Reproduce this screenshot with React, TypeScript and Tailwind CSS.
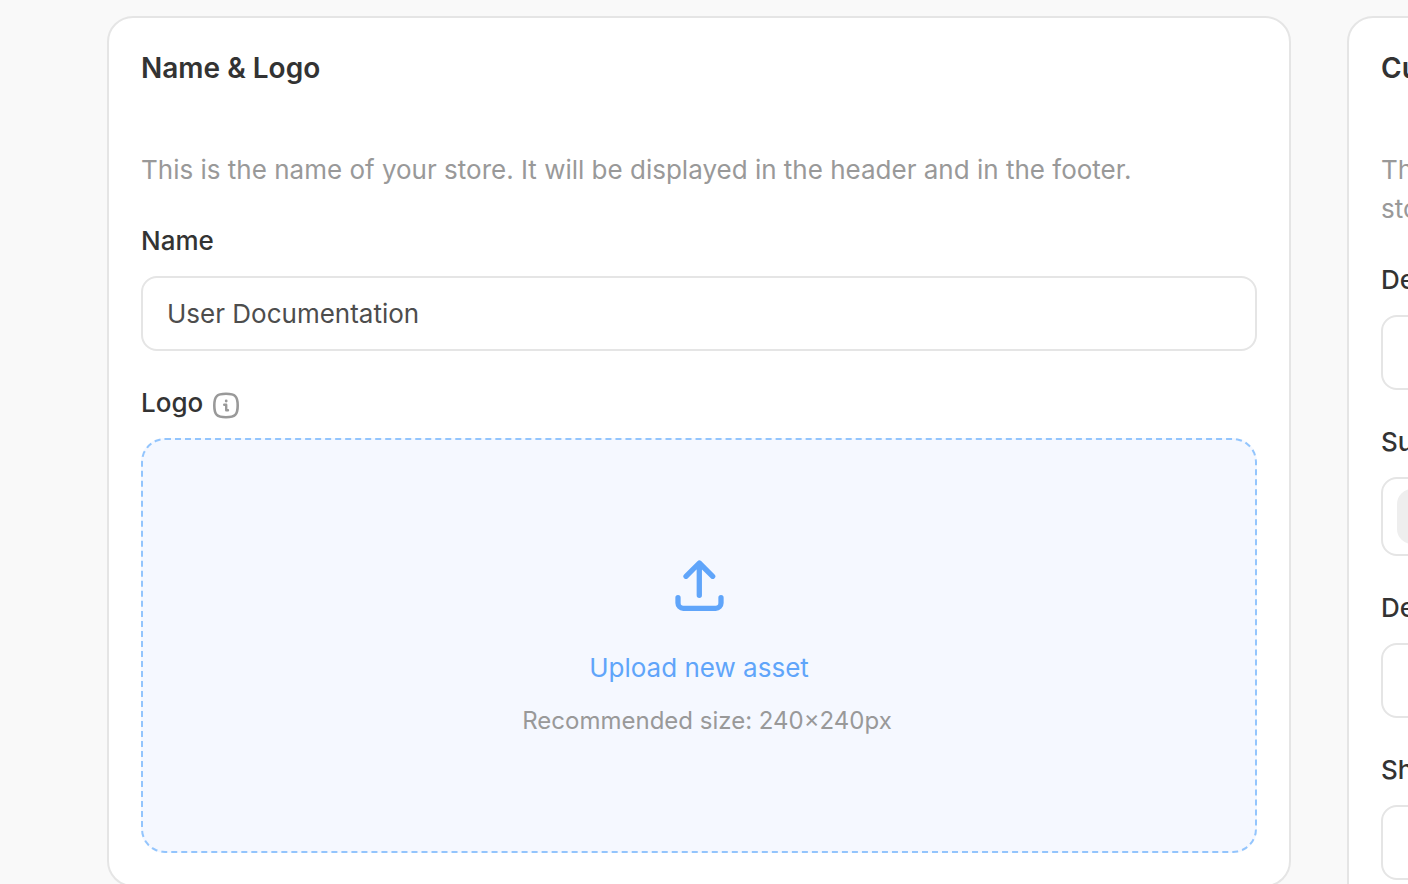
import React from "react";

function Label({ children }: { children: React.ReactNode }) {
  return <div className="h-[32px] text-[26px] leading-[32px] font-medium whitespace-nowrap text-[#333333]">{children}</div>;
}

function Field({ label, children }: { label: string; children?: React.ReactNode }) {
  return (
    <div className="flex flex-col gap-[19px]">
      <Label>{label}</Label>
      {children ?? <div className="h-[75px] rounded-[16px] border-2 border-[#e5e5e5] bg-white" />}
    </div>
  );
}

function InfoIcon() {
  return (
    <svg className="mt-[5px] h-[27px] w-[26px]" viewBox="0 -0.5 26 27" fill="none" stroke="#999999">
      <path
        d="M13 1.3c4 0 7.2.2 9.2 2.3 2.2 2.1 2.5 5.2 2.5 9.4s-.3 7.3-2.5 9.4c-2 2.1-5.200 2.300-9.200 2.300s-7.200-.2-9.200-2.300C1.600 20.300 1.300 17.200 1.300 13s.3-7.300 2.500-9.400C5.800 1.500 9 1.300 13 1.300Z"
        strokeWidth="2.6"
      />
      <path d="M11.2 12.200h2v5.600h1.800" strokeWidth="2.400" strokeLinecap="round" strokeLinejoin="round" />
      <circle cx="13.200" cy="8.500" r="1.400" fill="#999999" stroke="none" />
    </svg>
  );
}

function UploadIcon() {
  return (
    <svg className="h-[52px] w-[50px]" viewBox="0 0 50 52" fill="none" stroke="#60a5fa" strokeWidth="5.3" strokeLinecap="round" strokeLinejoin="round">
      <path d="M25.3 35.3V3.300M12 16.300L25.300 3l13.400 13.300M4 37.700v5.300a5.300 5.300 0 0 0 5.300 5.300h32.400a5.300 5.300 0 0 0 5.300-5.300v-5.300" />
    </svg>
  );
}

export default function App() {
  return (
    <main className="flex h-[884px] w-[1408px] gap-[56px] overflow-hidden bg-[#f9f9f9] pt-[16px] pl-[107px] font-['Inter',sans-serif]">
      <section className="flex h-[871px] w-[1184px] shrink-0 flex-col rounded-[26px] border-2 border-[#e5e5e5] bg-white px-[32px] pt-[32px]">
        <h2 className="h-[36px] text-[28px] leading-[36px] font-semibold text-[#333333]">Name &amp; Logo</h2>
        <p className="mt-[64px] mb-[36px] h-[39px] text-[26px] leading-[39px] whitespace-nowrap text-[#999999]">
          This is the name of your store. It will be displayed in the header and in the footer.
        </p>
        <Field label="Name">
          <div className="flex h-[75px] items-center rounded-[16px] border-2 border-[#e5e5e5] px-[24px] text-[26px] text-[#4d4d4d]">
            User Documentation
          </div>
        </Field>
        <div className="mt-[36px] flex h-[32px] gap-[10px]">
          <Label>Logo</Label>
          <InfoIcon />
        </div>
        <div className="mt-[19px] flex h-[415px] flex-col items-center rounded-[24px] border-2 border-dashed border-[#93c5fd] bg-[#f5f8ff] pt-[120px]">
          <UploadIcon />
          <div className="mt-[40px] text-[26px] leading-[32px] text-[#60a5fa]">Upload new asset</div>
          <div className="mt-[22px] ml-[16px] text-[24px] leading-[30px] text-[#999999]">Recommended size: 240×240px</div>
        </div>
      </section>
      <section className="h-[900px] w-[1184px] shrink-0 rounded-[26px] border-2 border-[#e5e5e5] bg-white px-[32px] pt-[32px]">
        <h2 className="h-[36px] text-[28px] leading-[36px] font-semibold text-[#333333]">Cu</h2>
        <p className="mt-[64px] mb-[36px] text-[26px] leading-[39px] text-[#999999]">
          Th
          <br />
          sto
        </p>
        <div className="flex flex-col gap-[36px]">
          <Field label="De" />
          <Field label="Su">
            <div className="flex h-[79px] items-center rounded-[16px] border-2 border-[#e5e5e5] px-[14px]">
              <div className="h-[55px] w-[160px] rounded-[15px] bg-[#eeeeee]" />
            </div>
          </Field>
          <Field label="De" />
          <Field label="Sh" />
        </div>
      </section>
    </main>
  );
}
